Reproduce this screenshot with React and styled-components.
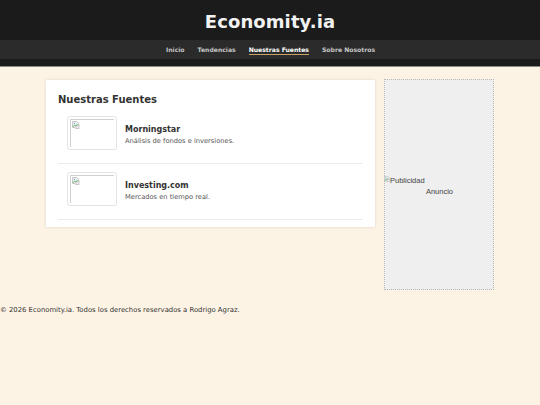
import React from 'react'
import styled, {createGlobalStyle} from 'styled-components'

const Global = createGlobalStyle`
  html, body {
    margin: 0;
    padding: 0;
    background: #fdf3e5;
    font-family: "DejaVu Sans", Verdana, sans-serif;
    color: #333;
    -webkit-font-smoothing: antialiased;
  }
`

const sources = [
  {name: 'Morningstar', desc: 'Análisis de fondos e inversiones.'},
  {name: 'Investing.com', desc: 'Mercados en tiempo real.'}
]

const links = ['Inicio', 'Tendencias', 'Nuestras Fuentes', 'Sobre Nosotros']

const BrokenIcon = ({size = 9}) => (
  <svg width={size} height={size} viewBox="0 0 16 16">
    <path d="M1 1h9l3 3v3L9 9 6 13H1z" fill="#f2f2f2" stroke="#9a9a9a" strokeWidth="1" />
    <path d="M2 12l3-4 2 2 3-3v2" fill="none" stroke="#4caf50" strokeWidth="1.6" />
    <circle cx="5" cy="5" r="1.4" fill="#5aa0d8" />
    <path d="M9 11l5-4v8H7z" fill="#f2f2f2" stroke="#9a9a9a" strokeWidth="1" />
  </svg>
)

const App = () => {
  return (
    <Page>
      <Global />
      <Header>
        <Title>Economity.ia</Title>
        <Nav>
          {links.map(l => (
            <NavLink key={l} active={l === 'Nuestras Fuentes' ? 1 : 0}>{l}</NavLink>
          ))}
        </Nav>
        <Strip />
      </Header>

      <Main>
        <Card>
          <Heading>Nuestras Fuentes</Heading>
          <List>
            {sources.map(s => (
              <Item key={s.name}>
                <Thumb>
                  <ThumbInner><BrokenIcon size={8} /></ThumbInner>
                </Thumb>
                <Info>
                  <ItemTitle>{s.name}</ItemTitle>
                  <ItemDesc>{s.desc}</ItemDesc>
                </Info>
              </Item>
            ))}
          </List>
        </Card>

        <Ad>
          <AdAlt><BrokenIcon size={6} />Publicidad</AdAlt>
          <AdLabel>Anuncio</AdLabel>
        </Ad>
      </Main>

      <Footer>© 2026 Economity.ia. Todos los derechos reservados a Rodrigo Agraz.</Footer>
    </Page>
  )
}

export default App

const Page = styled.div`
  width: 540px;
  min-height: 405px;
`

const Header = styled.header`
  background: #1b1b1b;
  display: flex;
  flex-direction: column;
  border-bottom: 1px solid #8a8a86;
`

const Title = styled.h1`
  margin: 0;
  height: 40px;
  line-height: 44px;
  text-align: center;
  font-size: 18px;
  font-weight: bold;
  color: #f2f2f2;
  letter-spacing: 0.1px;
`

const Nav = styled.nav`
  height: 19px;
  background: #2b2b2b;
  display: flex;
  justify-content: center;
  align-items: center;
  gap: 13px;
  padding-left: 1px;
`

const NavLink = styled.a`
  font-size: 6.1px;
  font-weight: bold;
  color: ${p => (p.active ? '#ffffff' : '#c4c4c4')};
  text-decoration: none;
  padding-bottom: 1px;
  margin-top: 1px;
  border-bottom: 1px solid ${p => (p.active ? '#c9a36a' : 'transparent')};
`

const Strip = styled.div`
  height: 7px;
`

const Main = styled.main`
  display: flex;
  align-items: flex-start;
  gap: 9px;
  padding: 13px 0 0 46px;
`

const Card = styled.section`
  width: 305px;
  background: #fff;
  padding: 10px 12px 7px;
  box-shadow: 0 0 3px rgba(0, 0, 0, 0.14);
  border-radius: 1px;
`

const Heading = styled.h2`
  margin: 0;
  padding-top: 3px;
  font-size: 10px;
  font-weight: bold;
  color: #333;
  line-height: 14px;
`

const List = styled.div`
  display: flex;
  flex-direction: column;
  margin-top: 9px;
`

const Item = styled.div`
  display: flex;
  align-items: center;
  gap: 8px;
  padding: 0 10px 13px 9px;
  border-bottom: 1px solid #ececec;
  & + & {
    padding-top: 8px;
  }
`

const Thumb = styled.div`
  width: 50px;
  height: 34px;
  box-sizing: border-box;
  border: 1px solid #e3e3e3;
  border-radius: 3px;
  padding: 2px;
  flex-shrink: 0;
`

const ThumbInner = styled.div`
  width: 100%;
  height: 100%;
  box-sizing: border-box;
  border-top: 1px solid #cfcfcf;
  border-left: 1px solid #cfcfcf;
  padding: 1px;
  line-height: 0;
`

const Info = styled.div`
  display: flex;
  flex-direction: column;
  gap: 2px;
  padding-top: 5px;
`

const ItemTitle = styled.h3`
  margin: 0;
  font-size: 8px;
  font-weight: bold;
  color: #333;
  line-height: 10px;
`

const ItemDesc = styled.p`
  margin: 0;
  font-size: 6.7px;
  color: #555;
  line-height: 9px;
`

const Ad = styled.aside`
  width: 110px;
  height: 211px;
  box-sizing: border-box;
  margin-top: -1px;
  background: #efefef;
  border: 1px dotted #b8b8b8;
  display: flex;
  flex-direction: column;
  justify-content: center;
  font-family: "Liberation Sans", Arial, sans-serif;
  font-size: 7.5px;
  color: #444;
`

const AdAlt = styled.div`
  display: flex;
  align-items: flex-start;
  line-height: 10px;
  margin-left: -1px;
  margin-top: 3px;
`

const AdLabel = styled.div`
  text-align: center;
  line-height: 10px;
  margin-top: 1px;
  padding-left: 1px;
`

const Footer = styled.footer`
  margin-top: 15px;
  font-size: 6.85px;
  color: #333;
  line-height: 10px;
`
